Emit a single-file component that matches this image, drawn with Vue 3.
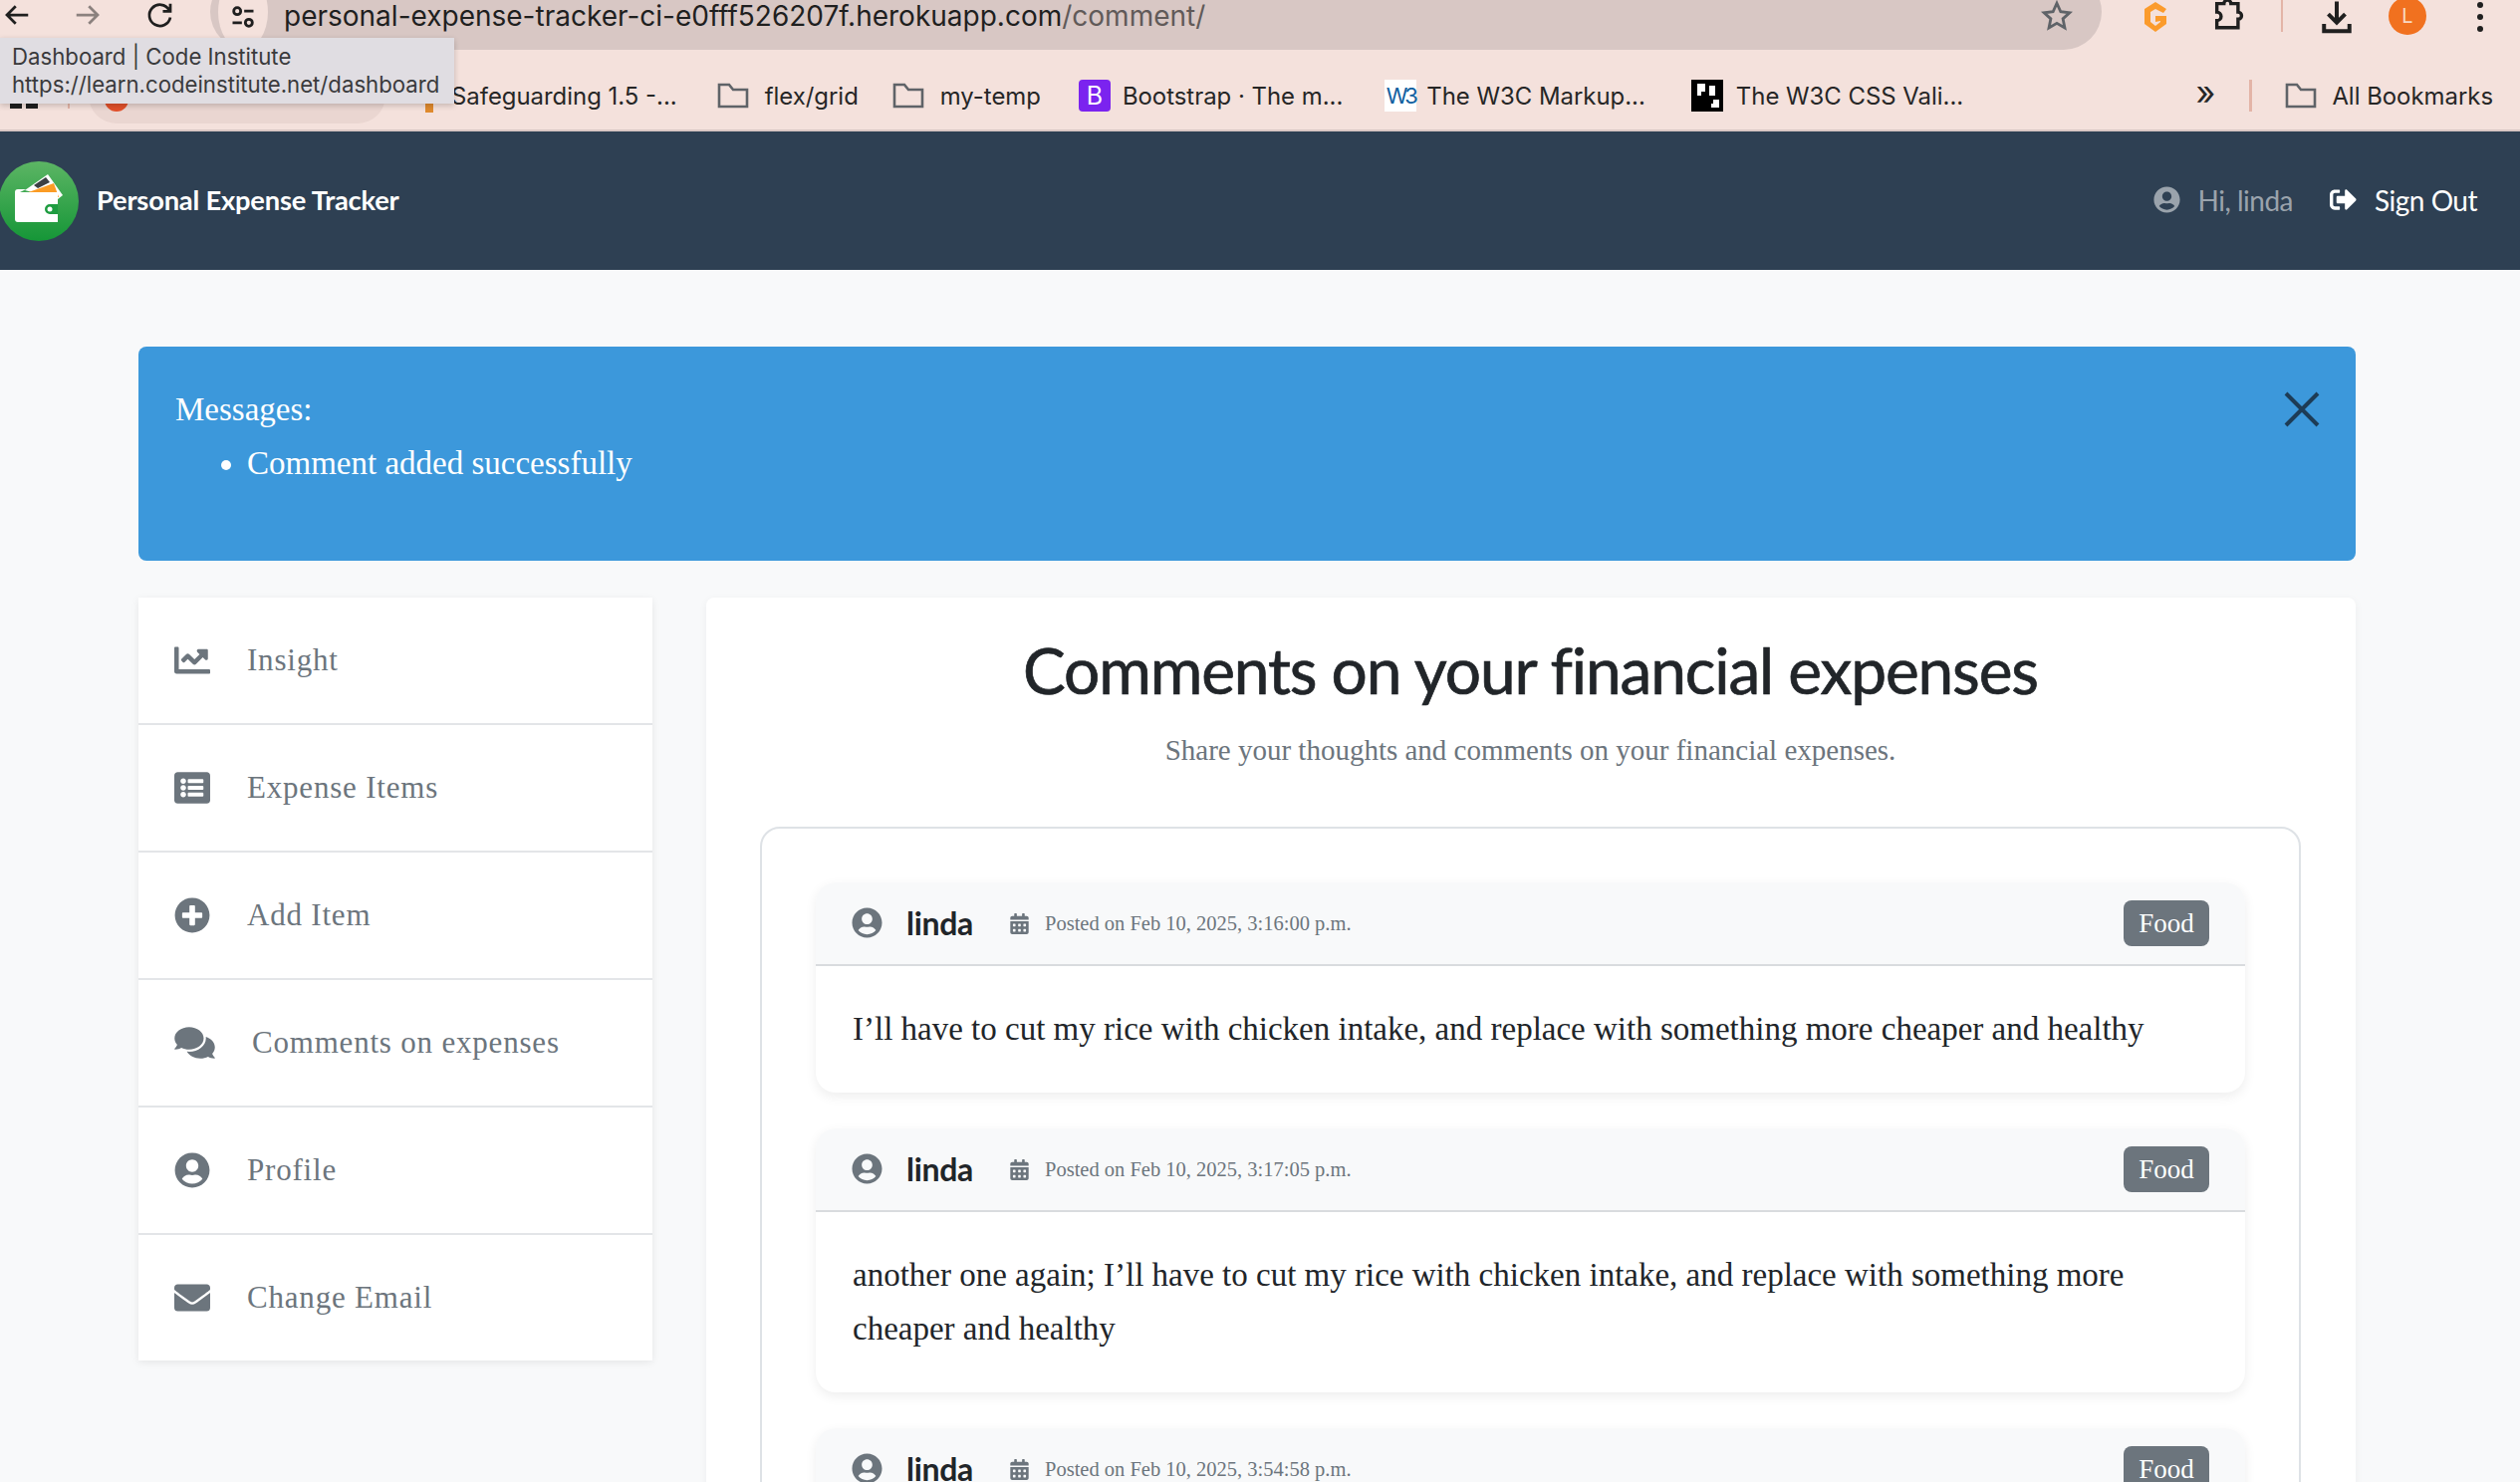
<script setup>
const icons = {
  chart: { box: '0 0 512 512', d: 'M496 384H64V80c0-8.84-7.16-16-16-16H16C7.16 64 0 71.16 0 80v336c0 17.67 14.33 32 32 32h464c8.84 0 16-7.16 16-16v-32c0-8.84-7.16-16-16-16zM464 96H345.94c-21.38 0-32.09 25.85-16.97 40.97l32.4 32.4L288 242.75l-73.37-73.37c-12.5-12.5-32.76-12.5-45.25 0l-68.69 68.69c-6.25 6.25-6.25 16.38 0 22.63l22.62 22.62c6.25 6.25 16.38 6.25 22.63 0L192 237.25l73.37 73.37c12.5 12.5 32.76 12.5 45.25 0l96-96 32.4 32.4c15.12 15.12 40.97 4.41 40.97-16.97V112c.01-8.84-7.15-16-15.99-16z' },
  list: { box: '0 0 512 512', d: 'M464 480H48c-26.51 0-48-21.49-48-48V80c0-26.51 21.49-48 48-48h416c26.51 0 48 21.49 48 48v352c0 26.51-21.49 48-48 48zM128 120c-22.091 0-40 17.909-40 40s17.909 40 40 40 40-17.909 40-40-17.909-40-40-40zm0 96c-22.091 0-40 17.909-40 40s17.909 40 40 40 40-17.909 40-40-17.909-40-40-40zm0 96c-22.091 0-40 17.909-40 40s17.909 40 40 40 40-17.909 40-40-17.909-40-40-40zm288-136v-32c0-6.627-5.373-12-12-12H204c-6.627 0-12 5.373-12 12v32c0 6.627 5.373 12 12 12h200c6.627 0 12-5.373 12-12zm0 96v-32c0-6.627-5.373-12-12-12H204c-6.627 0-12 5.373-12 12v32c0 6.627 5.373 12 12 12h200c6.627 0 12-5.373 12-12zm0 96v-32c0-6.627-5.373-12-12-12H204c-6.627 0-12 5.373-12 12v32c0 6.627 5.373 12 12 12h200c6.627 0 12-5.373 12-12z' },
  plus: { box: '0 0 512 512', d: 'M256 8C119 8 8 119 8 256s111 248 248 248 248-111 248-248S393 8 256 8zm144 276c0 6.6-5.4 12-12 12h-92v92c0 6.6-5.4 12-12 12h-56c-6.6 0-12-5.4-12-12v-92h-92c-6.6 0-12-5.4-12-12v-56c0-6.6 5.4-12 12-12h92v-92c0-6.6 5.4-12 12-12h56c6.6 0 12 5.4 12 12v92h92c6.6 0 12 5.4 12 12v56z' },
  comments: { box: '0 0 576 512', d: 'M416 192c0-88.4-93.1-160-208-160S0 103.6 0 192c0 34.3 14.1 65.9 38 92-13.4 30.2-35.5 54.2-35.8 54.5-2.2 2.3-2.8 5.7-1.5 8.7S4.8 352 8 352c36.6 0 66.9-12.3 88.7-25 32.2 15.7 70.3 25 111.3 25 114.9 0 208-71.6 208-160zm122 220c23.9-26 38-57.7 38-92 0-66.9-53.5-124.2-129.3-148.1.9 6.6 1.3 13.3 1.3 20.1 0 105.9-107.7 192-240 192-10.8 0-21.3-.8-31.7-1.9C207.8 439.6 281.8 480 368 480c41 0 79.1-9.2 111.3-25 21.8 12.7 52.1 25 88.7 25 3.2 0 6.1-1.9 7.3-4.8 1.3-2.9.7-6.3-1.5-8.7-.3-.3-22.4-24.2-35.8-54.5z' },
  user: { box: '0 0 496 512', d: 'M248 8C111 8 0 119 0 256s111 248 248 248 248-111 248-248S385 8 248 8zm0 96c48.6 0 88 39.4 88 88s-39.4 88-88 88-88-39.4-88-88 39.4-88 88-88zm0 344c-58.7 0-111.3-26.6-146.5-68.2 18.8-35.4 55.6-59.8 98.5-59.8 2.4 0 4.8.4 7.1 1.1 13 4.2 26.6 6.9 40.9 6.9 14.3 0 28-2.7 40.9-6.9 2.3-.7 4.7-1.1 7.1-1.1 42.9 0 79.7 24.4 98.5 59.8C359.3 421.4 306.7 448 248 448z' },
  envelope: { box: '0 0 512 512', d: 'M502.3 190.8c3.9-3.1 9.7-.2 9.7 4.7V400c0 26.5-21.5 48-48 48H48c-26.5 0-48-21.5-48-48V195.6c0-5 5.7-7.8 9.7-4.7 22.4 17.4 52.1 39.5 154.1 113.6 21.1 15.4 56.7 47.8 92.2 47.6 35.7.3 72-32.8 92.3-47.6 102-74.1 131.6-96.3 154-113.7zM256 320c23.2.4 56.6-29.2 73.4-41.4 132.7-96.3 142.8-104.7 173.4-128.7 5.8-4.5 9.2-11.5 9.2-18.9v-19c0-26.5-21.5-48-48-48H48C21.5 64 0 85.5 0 112v19c0 7.4 3.4 14.3 9.2 18.9 30.6 23.9 40.7 32.4 173.4 128.7 16.8 12.2 50.2 41.8 73.4 41.4z' },
  calendar: { box: '0 0 448 512', d: 'M0 464c0 26.5 21.5 48 48 48h352c26.5 0 48-21.5 48-48V192H0v272zm320-196c0-6.6 5.4-12 12-12h40c6.6 0 12 5.4 12 12v40c0 6.6-5.4 12-12 12h-40c-6.6 0-12-5.4-12-12v-40zm0 128c0-6.6 5.4-12 12-12h40c6.6 0 12 5.4 12 12v40c0 6.6-5.4 12-12 12h-40c-6.6 0-12-5.4-12-12v-40zM192 268c0-6.6 5.4-12 12-12h40c6.6 0 12 5.4 12 12v40c0 6.6-5.4 12-12 12h-40c-6.6 0-12-5.4-12-12v-40zm0 128c0-6.6 5.4-12 12-12h40c6.6 0 12 5.4 12 12v40c0 6.6-5.4 12-12 12h-40c-6.6 0-12-5.4-12-12v-40zM64 268c0-6.6 5.4-12 12-12h40c6.6 0 12 5.4 12 12v40c0 6.6-5.4 12-12 12H76c-6.6 0-12-5.4-12-12v-40zm0 128c0-6.6 5.4-12 12-12h40c6.6 0 12 5.4 12 12v40c0 6.6-5.4 12-12 12H76c-6.6 0-12-5.4-12-12v-40zM400 64h-48V16c0-8.8-7.2-16-16-16h-32c-8.8 0-16 7.2-16 16v48H160V16c0-8.8-7.2-16-16-16h-32c-8.8 0-16 7.2-16 16v48H48C21.5 64 0 85.5 0 112v48h448v-48c0-26.5-21.5-48-48-48z' },
  signout: { box: '0 0 512 512', d: 'M497 273L329 441c-15 15-41 4.5-41-17v-96H152c-13.3 0-24-10.7-24-24v-96c0-13.3 10.7-24 24-24h136V88c0-21.4 25.9-32 41-17l168 168c9.3 9.4 9.3 24.6 0 34zM192 436v-40c0-6.6-5.4-12-12-12H96c-17.7 0-32-14.3-32-32V160c0-17.7 14.3-32 32-32h84c6.6 0 12-5.4 12-12V76c0-6.6-5.4-12-12-12H96c-53 0-96 43-96 96v192c0 53 43 96 96 96h84c6.6 0 12-5.4 12-12z' },
};

const navItems = [
  { label: 'Insight', icon: 'chart' },
  { label: 'Expense Items', icon: 'list' },
  { label: 'Add Item', icon: 'plus' },
  { label: 'Comments on expenses', icon: 'comments' },
  { label: 'Profile', icon: 'user' },
  { label: 'Change Email', icon: 'envelope' },
];

const comments = [
  { date: 'Feb 10, 2025, 3:16:00 p.m.', text: 'I\u2019ll have to cut my rice with chicken intake, and replace with something more cheaper and healthy' },
  { date: 'Feb 10, 2025, 3:17:05 p.m.', text: 'another one again; I\u2019ll have to cut my rice with chicken intake, and replace with something more cheaper and healthy' },
  { date: 'Feb 10, 2025, 3:54:58 p.m.', text: '' },
];
</script>

<template>
  <div class="page">
    <header class="chrome">
      <div class="toolbar">
        <svg class="tool back" viewBox="0 0 24 24"><path d="M21 12H4M11 5l-7 7 7 7" /></svg>
        <svg class="tool forward" viewBox="0 0 24 24"><path d="M3 12h17M13 5l7 7-7 7" /></svg>
        <svg class="tool reload" viewBox="0 0 24 24"><path d="M19 8a8.5 8.5 0 1 0 1 6M20 3v6h-6" /></svg>
        <div class="pill">
          <span class="site-info">
            <svg viewBox="0 0 24 24"><circle cx="7" cy="7" r="3" /><path d="M13 7h8M3 17h8" /><circle cx="17" cy="17" r="3" /></svg>
          </span>
          <span class="url">personal-expense-tracker-ci-e0fff526207f.herokuapp.com<span class="url-path">/comment/</span></span>
          <svg class="star" viewBox="0 0 24 24"><path d="M12 3l2.7 6 6.3.7-4.7 4.3 1.3 6.4-5.6-3.2-5.6 3.2 1.3-6.4L3 9.700l6.300-.7z" /></svg>
        </div>
        <svg class="ext-g" viewBox="0 0 28 34"><path d="M14 2L3 9v15l11 8 11-8v-8H14v6l5-1v1l-5 4-5-4V12l5-3 8 4 3-4z" /></svg>
        <svg class="ext-puzzle" viewBox="0 0 24 24"><path d="M9 4a2.500 2.500 0 0 1 5 0h5v6a2.500 2.500 0 0 1 0 5v6H4v-5a2.500 2.500 0 0 0 0-6V4z" /></svg>
        <span class="tool-sep"></span>
        <svg class="download" viewBox="0 0 24 24"><path d="M12 1v14M6 10l6 6 6-6M3 17v5h18v-5" /></svg>
        <span class="avatar">L</span>
        <span class="dots"><i></i><i></i><i></i></span>
      </div>

      <div class="bookmarks">
        <span class="apps"><i></i><i></i></span>
        <span class="hidden-sep"></span>
        <span class="hidden-tab"><i></i></span>
        <span class="hidden-fav"></span>
        <span class="bm-safe">Safeguarding 1.5 -...</span>
        <span class="bm">
          <svg class="folder" viewBox="0 0 32 28"><path d="M2 25V3h10l4 5h14v17z" /></svg>flex/grid
        </span>
        <span class="bm bm-temp">
          <svg class="folder" viewBox="0 0 32 28"><path d="M2 25V3h10l4 5h14v17z" /></svg>my-temp
        </span>
        <span class="bm bm-bootstrap"><span class="fav-b">B</span>Bootstrap · The m...</span>
        <span class="bm bm-w3"><span class="fav-w3">W3</span>The W3C Markup...</span>
        <span class="bm bm-css">
          <svg class="fav-css" viewBox="0 0 16 16"><rect width="16" height="16" fill="#000" /><path d="M3 2h4v4H5v2H3zM9 3h3v5H9zM11 10h3v4h-4v-2h1z" fill="#fff" /></svg>The W3C CSS Vali...
        </span>
        <span class="spacer"></span>
        <span class="more">»</span>
        <span class="bm-sep"></span>
        <span class="bm bm-all">
          <svg class="folder" viewBox="0 0 32 28"><path d="M2 25V3h10l4 5h14v17z" /></svg>All Bookmarks
        </span>
      </div>

      <div class="tooltip">
        <div>Dashboard | Code Institute</div>
        <div>https://learn.codeinstitute.net/dashboard</div>
      </div>
    </header>

    <nav class="navbar">
      <svg class="logo" viewBox="0 0 80 80">
        <defs>
          <linearGradient id="logoFill" x1="0" y1="0" x2="0" y2="1">
            <stop offset="0" stop-color="#5cb564" />
            <stop offset="1" stop-color="#159637" />
          </linearGradient>
        </defs>
        <circle cx="39" cy="40" r="40" fill="url(#logoFill)" />
        <polygon points="25,29 48,13 63,34 58,38" fill="#fff" />
        <polygon points="34,24 46,16 50,21 38,27" fill="#3c3f44" />
        <polygon points="23,33 54,22 59,36" fill="#fb9c25" />
        <path d="M18 28h8l-6 3h38v30H18a3 3 0 0 1-3-3V31a3 3 0 0 1 3-3z" fill="#fff" />
        <path d="M58 43H50a4.500 4.500 0 0 0 0 10h8z" fill="#1e9c40" />
        <circle cx="50" cy="48" r="2.500" fill="#fff" />
      </svg>
      <span class="brand">Personal Expense Tracker</span>
      <span class="nav-user">
        <svg class="nav-icon" :viewBox="icons.user.box"><path :d="icons.user.d" /></svg>Hi, linda
      </span>
      <span class="nav-signout">
        <svg class="nav-icon" :viewBox="icons.signout.box"><path :d="icons.signout.d" /></svg>Sign Out
      </span>
    </nav>

    <main class="content">
      <section class="alert">
        <div class="alert-text">
          <div>Messages:</div>
          <ul>
            <li>Comment added successfully</li>
          </ul>
        </div>
        <svg class="alert-close" viewBox="0 0 36 36"><path d="M2 2l32 32M34 2L2 34" /></svg>
      </section>

      <div class="columns">
        <aside class="sidebar">
          <a v-for="item in navItems" :key="item.label" class="side-item">
            <svg class="side-icon" :class="{ wide: item.icon === 'comments' }" :viewBox="icons[item.icon].box"><path :d="icons[item.icon].d" /></svg>
            <span>{{ item.label }}</span>
          </a>
        </aside>

        <section class="panel">
          <h1>Comments on your financial expenses</h1>
          <p class="lead">Share your thoughts and comments on your financial expenses.</p>

          <div class="comment-box">
            <article v-for="c in comments" :key="c.date" class="comment">
              <div class="comment-head">
                <svg class="head-user" :viewBox="icons.user.box"><path :d="icons.user.d" /></svg>
                <strong class="author">linda</strong>
                <svg class="head-cal" :viewBox="icons.calendar.box"><path :d="icons.calendar.d" /></svg>
                <span class="posted">Posted on {{ c.date }}</span>
                <span class="badge">Food</span>
              </div>
              <p v-if="c.text" class="comment-body">{{ c.text }}</p>
            </article>
          </div>
        </section>
      </div>
    </main>
  </div>
</template>

<style>
html,
body {
  margin: 0;
  background: #f8f9fa;
}
</style>

<style scoped>
.page {
  height: 1488px;
  overflow: hidden;
  background: #f8f9fa;
  font-family: "Liberation Serif", serif;
}

.chrome {
  position: relative;
  height: 132px;
  box-sizing: border-box;
  background: #f4e1dc;
  border-bottom: 2px solid #d8c7c4;
  font-family: Inter, "Liberation Sans", sans-serif;
}

.toolbar {
  display: flex;
  align-items: flex-start;
  height: 50px;
}

.tool {
  width: 30px;
  height: 30px;
  flex: none;
  fill: none;
  stroke: #1f1f1f;
  stroke-width: 2.2;
}

.back { margin-left: 2px; }
.forward { margin-left: 41px; stroke: #8b817e; }
.reload { margin-left: 43px; }

.pill {
  display: flex;
  align-items: flex-start;
  width: 1899px;
  height: 76px;
  margin: -26px 0 0 35px;
  box-sizing: border-box;
  padding: 26px 28px 0 8px;
  background: #d8c7c4;
  border-radius: 38px;
  flex: none;
}

.site-info {
  display: flex;
  align-items: center;
  justify-content: center;
  width: 50px;
  height: 76px;
  margin-top: -26px;
  background: #f4e1dc;
  border-radius: 50%;
}

.site-info svg {
  width: 28px;
  height: 28px;
  margin-top: 9px;
  fill: none;
  stroke: #1f1f1f;
  stroke-width: 2.400;
}

.url {
  margin-left: 16px;
  font-size: 28px;
  line-height: 34px;
  margin-top: -1px;
  color: #1f1f1f;
  white-space: nowrap;
}

.url-path { color: #615a59; }

.star {
  width: 34px;
  height: 34px;
  margin: -1px 0 0 auto;
  fill: none;
  stroke: #5f6368;
  stroke-width: 2;
}

.ext-g {
  width: 30px;
  height: 34px;
  margin-left: 39px;
  flex: none;
  fill: #fb9b2c;
}

.ext-puzzle {
  width: 34px;
  height: 34px;
  margin: -2px 0 0 41px;
  flex: none;
  fill: none;
  stroke: #1f1f1f;
  stroke-width: 2.400;
}

.tool-sep {
  width: 2px;
  height: 32px;
  margin-left: 36px;
  background: #e3b4a7;
  flex: none;
}

.download {
  width: 36px;
  height: 34px;
  margin-left: 36px;
  flex: none;
  fill: none;
  stroke: #1f1f1f;
  stroke-width: 2.800;
}

.avatar {
  display: flex;
  align-items: center;
  justify-content: center;
  width: 38px;
  height: 38px;
  margin: -3px 0 0 34px;
  border-radius: 50%;
  background: #f1711f;
  color: #f8d8c3;
  font-size: 20px;
  flex: none;
}

.dots {
  display: flex;
  flex-direction: column;
  gap: 6px;
  margin: 2px 0 0 51px;
}

.dots i {
  width: 6px;
  height: 6px;
  border-radius: 50%;
  background: #1f1f1f;
}

.bookmarks {
  display: flex;
  align-items: center;
  height: 80px;
  box-sizing: border-box;
  padding: 12px 27px 0 10px;
  font-size: 23.900px;
  color: #262626;
  white-space: nowrap;
}

/* shortcuts that sit mostly under the tooltip */
.apps {
  display: flex;
  gap: 4px;
  width: 28px;
  height: 26px;
  flex: none;
}

.apps i {
  width: 12px;
  height: 26px;
  background: #1f1f1f;
}

.hidden-sep {
  width: 2px;
  height: 26px;
  margin-left: 30px;
  background: #e3b4a7;
  flex: none;
}

.hidden-tab {
  display: flex;
  align-items: center;
  width: 298px;
  height: 56px;
  margin-left: 19px;
  background: #ead6d1;
  border-radius: 28px;
  flex: none;
}

.hidden-tab i {
  width: 24px;
  height: 24px;
  margin: 8px 0 0 16px;
  border-radius: 50%;
  background: #e2502a;
}

.hidden-fav {
  width: 8px;
  height: 20px;
  margin: 14px 18px 0 40px;
  background: #e08a2e;
  flex: none;
}

.bm {
  display: flex;
  align-items: center;
  gap: 16px;
  margin-left: 40px;
}

.bm-temp { margin-left: 34px; }
.bm-bootstrap { gap: 12px; margin-left: 38px; }
.bm-w3 { margin-left: 42px; gap: 10px; }
.bm-css { margin-left: 46px; gap: 13px; }
.bm-all { margin-left: 33px; gap: 15px; }

.folder {
  width: 32px;
  height: 28px;
  fill: none;
  stroke: #5f6368;
  stroke-width: 2.600;
}

.fav-b {
  display: flex;
  align-items: center;
  justify-content: center;
  width: 32px;
  height: 32px;
  background: #7b23ef;
  border-radius: 4px;
  color: #fff;
  font-size: 25px;
}

.fav-w3 {
  display: flex;
  align-items: center;
  justify-content: center;
  width: 32px;
  height: 32px;
  background: #fff;
  color: #11609f;
  font-size: 22px;
  letter-spacing: -3px;
}

.fav-css {
  width: 32px;
  height: 32px;
}

.spacer { flex: 1; }

.more {
  font-size: 34px;
  line-height: 1;
  margin-top: -6px;
}

.bm-sep {
  width: 3px;
  height: 32px;
  margin-left: 34px;
  background: #e3b4a7;
}

.tooltip {
  position: absolute;
  top: 38px;
  left: 0;
  width: 456px;
  height: 66px;
  box-sizing: border-box;
  padding: 5px 12px;
  background: #e0dde2;
  box-shadow: 0 2px 6px rgba(0, 0, 0, 0.2);
  font-size: 22.200px;
  line-height: 28px;
  color: #3a3a3c;
  white-space: nowrap;
}

.navbar {
  display: flex;
  align-items: center;
  height: 139px;
  padding-right: 43px;
  background: #2e4053;
  font-family: Lato, "Open Sans", sans-serif;
}

.logo {
  width: 80px;
  height: 80px;
  flex: none;
}

.brand {
  margin: -2px 0 0 17px;
  font-size: 27.300px;
  font-weight: 700;
  color: #fff;
  letter-spacing: -0.200px;
}

.nav-user,
.nav-signout {
  display: flex;
  align-items: center;
  gap: 18px;
  margin-top: -2px;
  font-size: 28px;
  letter-spacing: -0.500px;
}

.nav-user {
  margin-left: auto;
  color: #9aa3ac;
}

.nav-signout {
  margin-left: 37px;
  color: #fff;
}

.nav-icon {
  width: 27px;
  height: 27px;
  fill: currentColor;
}

.content {
  padding: 77px 165px 0 139px;
}

.alert {
  display: flex;
  justify-content: space-between;
  height: 215px;
  box-sizing: border-box;
  padding: 36px 36px 0 37px;
  background: #3c98db;
  border-radius: 8px;
  color: #fff;
  font-size: 33px;
  line-height: 54px;
}

.alert ul {
  margin: 0;
  padding-left: 72px;
}

.alert-close {
  width: 36px;
  height: 36px;
  margin: 9px 0 0;
  fill: none;
  stroke: #1d3c56;
  stroke-width: 4;
}

.columns {
  display: grid;
  grid-template-columns: 516px 1656px;
  gap: 54px;
  margin-top: 37px;
}

.sidebar {
  align-self: start;
  background: #fff;
  box-shadow: 0 2px 8px rgba(0, 0, 0, 0.08);
}

.side-item {
  display: flex;
  align-items: center;
  gap: 37px;
  height: 128px;
  box-sizing: border-box;
  padding-left: 36px;
  border-bottom: 2px solid #e3e5e8;
  color: #6c757d;
  font-size: 31px;
  letter-spacing: 0.800px;
}

.side-item:last-child {
  height: 126px;
  border-bottom: 0;
}

.side-icon {
  width: 36px;
  height: 36px;
  flex: none;
  fill: #6c757d;
}

.side-icon.wide { width: 41px; }

.panel {
  padding: 35px 55px 40px 54px;
  background: #fff;
  border-radius: 8px;
  box-shadow: 0 2px 8px rgba(0, 0, 0, 0.05);
}

h1 {
  margin: 0;
  text-align: center;
  font-family: Lato, "Open Sans", sans-serif;
  font-size: 64px;
  font-weight: 400;
  line-height: 76px;
  letter-spacing: -1.150px;
  -webkit-text-stroke: 0.700px #212529;
  color: #212529;
}

.lead {
  margin: 20px 0 0;
  text-align: center;
  font-size: 29px;
  line-height: 44px;
  color: #6c757d;
}

.comment-box {
  margin-top: 55px;
  padding: 54px 54px 0;
  border: 2px solid #dee2e6;
  border-radius: 20px;
}

.comment {
  margin-bottom: 36px;
  background: #fff;
  border-radius: 20px;
  box-shadow: 0 4px 12px rgba(0, 0, 0, 0.07);
}

.comment-head {
  display: flex;
  align-items: center;
  height: 84px;
  box-sizing: border-box;
  padding: 0 36px 0 36px;
  background: #f8f9fa;
  border-bottom: 2px solid #d9dbde;
  border-radius: 20px 20px 0 0;
}

.head-user {
  width: 31px;
  height: 31px;
  margin-top: -2px;
  flex: none;
  fill: #6c757d;
}

.author {
  margin: -2px 0 0 24px;
  font-family: Lato, "Open Sans", sans-serif;
  font-size: 32px;
  font-weight: 700;
  letter-spacing: -0.300px;
  color: #212529;
}

.head-cal {
  width: 19px;
  height: 21px;
  margin-left: 37px;
  flex: none;
  fill: #6c757d;
}

.posted {
  margin-left: 16px;
  font-size: 20.500px;
  color: #6c757d;
}

.badge {
  display: flex;
  align-items: center;
  justify-content: center;
  width: 86px;
  height: 46px;
  margin-left: auto;
  background: #6c757d;
  border-radius: 8px;
  color: #fff;
  font-size: 27px;
}

.comment-body {
  margin: 0;
  padding: 36px 37px 37px;
  font-size: 33px;
  line-height: 54px;
  color: #212529;
}
</style>
